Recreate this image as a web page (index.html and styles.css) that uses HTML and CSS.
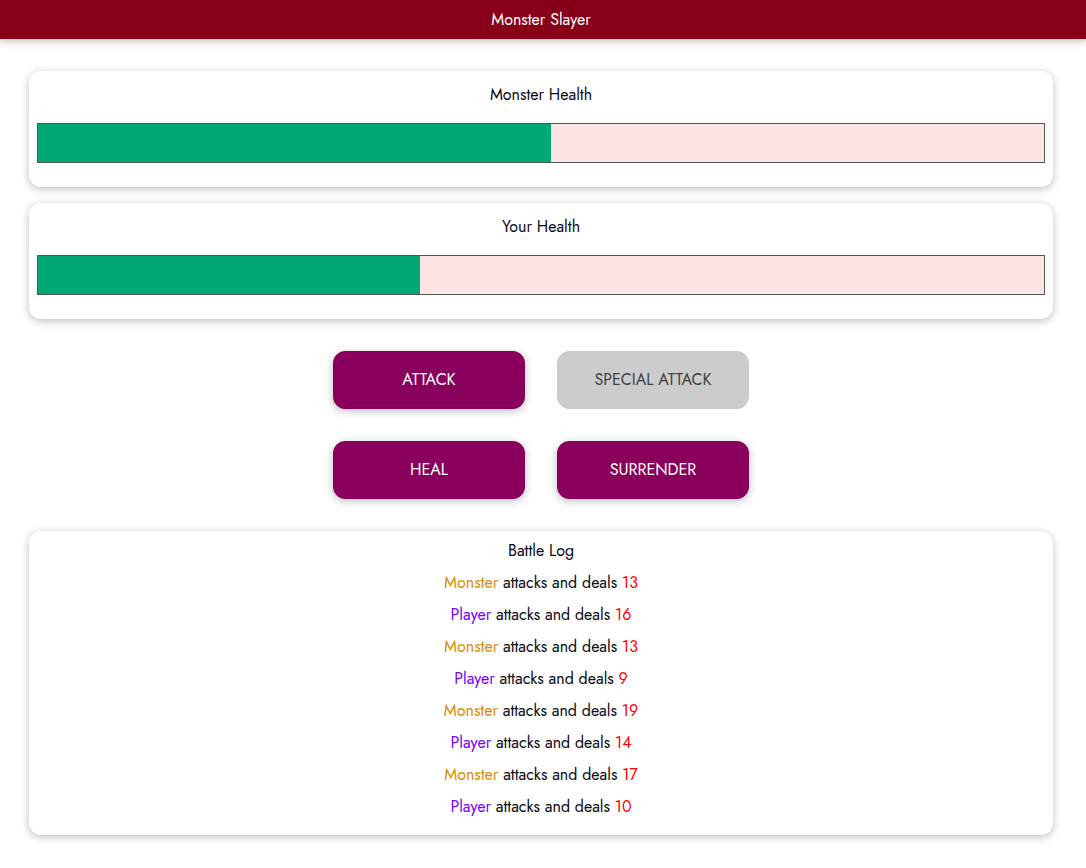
FILE: index.html
```html
<!DOCTYPE html>
<html lang="en">
<head>
<meta charset="utf-8">
<title>Monster Slayer</title>
<link rel="stylesheet" href="styles.css">
</head>
<body>
<header class="top"><h1 class="top__title">Monster Slayer</h1></header>
<div class="game">
  <section class="card">
    <h2 class="card__title">Monster Health</h2>
    <div class="healthbar"><div class="healthbar__value" style="width: 51%"></div></div>
  </section>
  <section class="card">
    <h2 class="card__title">Your Health</h2>
    <div class="healthbar"><div class="healthbar__value" style="width: 38%"></div></div>
  </section>
  <section class="controls">
    <button class="btn">ATTACK</button>
    <button class="btn" disabled>SPECIAL ATTACK</button>
    <button class="btn">HEAL</button>
    <button class="btn">SURRENDER</button>
  </section>
  <section class="card log">
    <h2 class="log__title">Battle Log</h2>
    <ul class="log__list">
      <li><span class="log--monster">Monster</span> attacks and deals <span class="log--damage">13</span></li>
      <li><span class="log--player">Player</span> attacks and deals <span class="log--damage">16</span></li>
      <li><span class="log--monster">Monster</span> attacks and deals <span class="log--damage">13</span></li>
      <li><span class="log--player">Player</span> attacks and deals <span class="log--damage">9</span></li>
      <li><span class="log--monster">Monster</span> attacks and deals <span class="log--damage">19</span></li>
      <li><span class="log--player">Player</span> attacks and deals <span class="log--damage">14</span></li>
      <li><span class="log--monster">Monster</span> attacks and deals <span class="log--damage">17</span></li>
      <li><span class="log--player">Player</span> attacks and deals <span class="log--damage">10</span></li>
    </ul>
  </section>
</div>
</body>
</html>
```

FILE: styles.css
```css
* { box-sizing: border-box; }
html, body {
  margin: 0;
  padding: 0;
  background: #fff;
}
body {
  font-family: "Jost", "Lato", "Noto Sans", sans-serif;
  font-size: 16px;
  line-height: 24px;
  color: #0a0a14;
}
.top {
  background-color: #880017;
  color: #fff;
  text-align: center;
  height: 39px;
  padding-right: 4px;
  box-shadow: 0 2px 8px rgba(0, 0, 0, 0.26);
  display: flex;
  align-items: center;
  justify-content: center;
  margin-bottom: 32px;
}
.top__title {
  margin: 0;
  font-size: 16px;
  font-weight: 400;
  line-height: 24px;
}
.game {
  margin: 0 33px 0 29px;
}
.card {
  text-align: center;
  padding: 8px;
  margin-bottom: 16px;
  box-shadow: 0 2px 8px rgba(0, 0, 0, 0.26);
  border-radius: 12px;
  background: #fff;
}
.card__title {
  margin: 4px;
  font-size: 16px;
  font-weight: 400;
  line-height: 24px;
}
.healthbar {
  width: 100%;
  height: 40px;
  border: 1px solid #575757;
  margin: 16px 0;
  background: #fde5e5;
}
.healthbar__value {
  background-color: #00a876;
  height: 100%;
}
.controls {
  display: grid;
  grid-template-columns: 192px 192px;
  column-gap: 32px;
  row-gap: 32px;
  justify-content: center;
  padding: 16px 0;
  margin-bottom: 16px;
}
.btn {
  font: inherit;
  border: 1px solid #88005b;
  background-color: #88005b;
  color: #fff;
  padding: 16px 0;
  border-radius: 12px;
  width: 192px;
  height: 58px;
  box-shadow: 0 2px 8px rgba(0, 0, 0, 0.26);
}
.btn:disabled {
  background-color: #ccc;
  border-color: #ccc;
  box-shadow: none;
  color: #3f3f3f;
}
.log__title {
  margin: 0;
  font-size: 16px;
  font-weight: 400;
  line-height: 24px;
}
.log__list {
  list-style: none;
  margin: 0;
  padding: 0;
}
.log__list li {
  margin: 8px 0;
}
.log--player { color: #7700ff; }
.log--monster { color: #da8d00; }
.log--damage { color: #ff0000; }
```
